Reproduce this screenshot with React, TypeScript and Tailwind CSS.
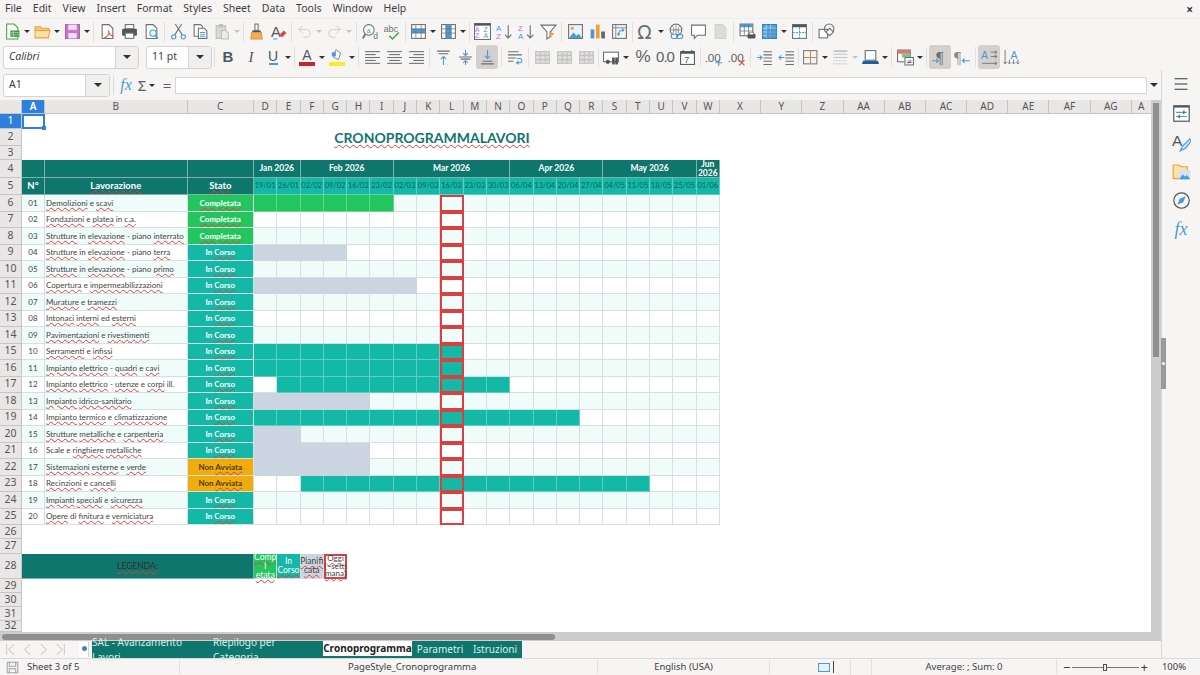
import type { ReactNode } from "react";
import { Menu as MenuIcon, Redo2, Undo2 } from "lucide-react";

const UI = "font-['Noto_Sans',sans-serif]";
const SHEET = "font-['Lato','Liberation_Sans',sans-serif]";

const menus = ["File", "Edit", "View", "Insert", "Format", "Styles", "Sheet", "Data", "Tools", "Window", "Help"];
const colLetters = ["A", "B", "C", "D", "E", "F", "G", "H", "I", "J", "K", "L", "M", "N", "O", "P", "Q", "R", "S", "T", "U", "V", "W", "X", "Y", "Z", "AA", "AB", "AC", "AD", "AE", "AF", "AG", "A"];
const dates = ["19/01", "26/01", "02/02", "09/02", "16/02", "23/02", "02/03", "09/03", "16/03", "23/03", "30/03", "06/04", "13/04", "20/04", "27/04", "04/05", "11/05", "18/05", "25/05", "01/06"];

type Bar = [string, number, number];
const rows: { name: string; state: string; bar?: Bar }[] = [
  { name: "~Demolizioni e ~scavi", state: "done", bar: ["done", 0, 5] },
  { name: "~Fondazioni e ~platea in ~c.a.", state: "done" },
  { name: "~Strutture in ~elevazione - piano ~interrato", state: "done" },
  { name: "~Strutture in ~elevazione - piano ~terra", state: "run", bar: ["plan", 0, 3] },
  { name: "~Strutture in ~elevazione - piano ~primo", state: "run" },
  { name: "~Copertura e ~impermeabilizzazioni", state: "run", bar: ["plan", 0, 6] },
  { name: "~Murature e ~tramezzi", state: "run" },
  { name: "~Intonaci ~interni ed ~esterni", state: "run" },
  { name: "~Pavimentazioni e ~rivestimenti", state: "run" },
  { name: "~Serramenti e ~infissi", state: "run", bar: ["run", 0, 8] },
  { name: "~Impianto ~elettrico - ~quadri e ~cavi", state: "run", bar: ["run", 0, 8] },
  { name: "~Impianto ~elettrico - ~utenze e ~corpi ill.", state: "run", bar: ["run", 1, 10] },
  { name: "~Impianto ~idrico-sanitario", state: "run", bar: ["plan", 0, 4] },
  { name: "~Impianto ~termico e ~climatizzazione", state: "run", bar: ["run", 0, 13] },
  { name: "~Strutture ~metalliche e ~carpenteria", state: "run", bar: ["plan", 0, 1] },
  { name: "Scale e ~ringhiere ~metalliche", state: "run", bar: ["plan", 0, 4] },
  { name: "~Sistemazioni ~esterne e ~verde", state: "wait", bar: ["plan", 0, 4] },
  { name: "~Recinzioni e ~cancelli", state: "wait", bar: ["run", 2, 16] },
  { name: "~Impianti ~speciali e ~sicurezza", state: "run" },
  { name: "~Opere di ~finitura e ~verniciatura", state: "run" },
];

const stateCell: Record<string, string> = {
  done: "bg-[#22c55e] text-white",
  run: "bg-[#14b8a6] text-white",
  wait: "bg-[#f0ac0a] text-[#4a3a10]",
};
const stateText: Record<string, string> = { done: "~Completata", run: "In ~Corso", wait: "Non ~Avviata" };
const barCell: Record<string, string> = {
  done: "bg-[#22c55e] border-[#5fd88a]",
  run: "bg-[#14b8a6] border-[#5ccfc2]",
  plan: "bg-[#cbd5e1] border-[#cbd5e1]",
};

// words with a leading ~ get the red spellcheck squiggle
function Spell({ text }: { text: string }) {
  return (
    <>
      {text.split(" ").map((w, i) => (
        <span key={i}>
          {i > 0 && " "}
          {w.startsWith("~") ? (
            <span className="underline decoration-wavy decoration-[#e23b3b] decoration-1 underline-offset-1">{w.slice(1)}</span>
          ) : (
            w
          )}
        </span>
      ))}
    </>
  );
}

function Svg({ children, className = "w-[17px] h-[17px]" }: { children: ReactNode; className?: string }) {
  return (
    <svg viewBox="0 0 16 16" fill="none" strokeWidth="1" className={className}>
      {children}
    </svg>
  );
}

function Btn({ children, active }: { children: ReactNode; active?: boolean }) {
  return (
    <div className={`w-[22px] h-[24px] shrink-0 flex items-center justify-center rounded-[3px] ${active ? "bg-[#d3d0cd]" : ""}`}>{children}</div>
  );
}
const Arr = ({ dim }: { dim?: boolean }) => (
  <div className="w-[8px] shrink-0 flex items-center justify-center">
    <div className={`w-0 h-0 border-l-[3px] border-r-[3px] border-t-[3px] border-l-transparent border-r-transparent ${dim ? "border-t-[#c4c4c4]" : "border-t-[#2e3436]"}`} />
  </div>
);
const Sep = ({ className = "w-[5px]" }: { className?: string }) => (
  <div className={`${className} shrink-0 flex justify-center`}>
    <div className="w-px h-[20px] bg-[#e2e0dd]" />
  </div>
);

const G = "#6b6f72";
const B = "#4a9ad4";

const Lines = ({ rows: r }: { rows: [number, number][] }) => (
  <>
    {r.map(([a, b], i) => (
      <path key={i} d={`M${a} ${2.5 + i * 2.75}H${b}`} stroke={G} />
    ))}
  </>
);
const Doc = ({ s = G }: { s?: string }) => <path d="M3 1.5h6.5l3.5 3.5v9.5H3z" stroke={s} fill="#fff" />;
const Grid3 = ({ s = "#c2c2c2" }: { s?: string }) => (
  <>
    <rect x="1.5" y="2.5" width="13" height="11" fill="#dedddb" stroke={s} />
    <path d="M1.5 6h13M1.5 10h13M6 2.5v11M10.5 2.5v11" stroke={s} />
  </>
);
const Txt = ({ x, y, s, c, w = 400, t, f = "Liberation Sans", i }: { x: number; y: number; s: number; c: string; w?: number; t: string; f?: string; i?: boolean }) => (
  <text x={x} y={y} fontSize={s} fill={c} fontWeight={w} fontFamily={f} fontStyle={i ? "italic" : "normal"}>
    {t}
  </text>
);

const icons = {
  newDoc: (
    <Svg>
      <path d="M2.5 1h7l3.5 3.5V15h-10.500z" stroke="#43a047" fill="#fff" />
      <rect x="6" y="7" width="8.500" height="6" fill="#3d9a45" />
      <path d="M6 9h8.500M6 11h8.500M9 7v6" stroke="#bfe5c1" strokeWidth=".6" />
    </Svg>
  ),
  open: (
    <Svg>
      <path d="M1 3.500h5l1.500 1.500H14v2H1z" fill="#f9c57c" stroke="#e8a33d" />
      <path d="M1 14V7h14l-1.500 7z" fill="#fde0ae" stroke="#e8a33d" />
    </Svg>
  ),
  save: (
    <Svg>
      <rect x="1.500" y="1.500" width="13" height="13" fill="#c678cf" stroke="#a95cb5" />
      <rect x="4" y="1.500" width="8" height="5" fill="#f3dcf5" />
      <rect x="4" y="9.500" width="8" height="5" fill="#f3dcf5" />
    </Svg>
  ),
  pdf: (
    <Svg>
      <Doc />
      <path d="M5 14c3-1 5-4 4-7 0 3 2 5 5 5.500" stroke="#e0493d" />
    </Svg>
  ),
  print: (
    <Svg>
      <rect x="4" y="1.500" width="8" height="4" stroke={G} fill="#fff" />
      <rect x="1" y="5.500" width="14" height="6.500" rx="1" fill="#50575c" />
      <rect x="4" y="9.500" width="8" height="5" fill="#fff" stroke={G} />
    </Svg>
  ),
  preview: (
    <Svg>
      <Doc />
      <circle cx="9.500" cy="9.500" r="3" stroke={B} fill="#eaf4fb" />
      <path d="M11.500 12l2.500 2.500" stroke={B} strokeWidth="1.500" />
    </Svg>
  ),
  cut: (
    <Svg>
      <circle cx="3.500" cy="13" r="2" stroke={B} />
      <circle cx="12.500" cy="13" r="2" stroke={B} />
      <path d="M4.500 11.200L11 1M11.500 11.200L5 1" stroke={G} />
    </Svg>
  ),
  copy: (
    <Svg>
      <path d="M2 1.500h6l2 2v9H2z" stroke={G} fill="#fff" />
      <path d="M6 5h5.500l2.500 2.500v7H6z" stroke={G} fill="#fff" />
      <path d="M7.500 9h5M7.500 11h5M7.500 13h5" stroke={B} />
    </Svg>
  ),
  paste: (
    <Svg>
      <rect x="2" y="2.500" width="9" height="12" fill="#d8d8d6" stroke="#bdbdbd" />
      <rect x="4.500" y="1" width="4" height="3" fill="#bdbdbd" />
      <path d="M7 7h4l2.500 2.500V15H7z" fill="#ececea" stroke="#bdbdbd" />
    </Svg>
  ),
  clone: (
    <Svg>
      <rect x="6.500" y="1" width="3" height="6" fill="#fff" stroke={G} />
      <rect x="4" y="7" width="8" height="2" fill="#50575c" />
      <path d="M3.500 9h9l.8 6H2.700z" fill="#f5ab54" stroke="#e8923a" />
    </Svg>
  ),
  clear: (
    <Svg>
      <Txt x={1} y={13} s={14} c="#50575c" t="A" />
      <path d="M7 15H3" stroke={B} />
      <path d="M9 11l4-4 2.500 2.500-4 4z" fill="#e0493d" />
    </Svg>
  ),
  undo: <Undo2 className="w-[17px] h-[17px] text-[#c9c9c9]" strokeWidth={1.2} />,
  redo: <Redo2 className="w-[17px] h-[17px] text-[#c9c9c9]" strokeWidth={1.2} />,
  find: (
    <Svg>
      <circle cx="6.500" cy="6.500" r="5" stroke={G} fill="#fff" />
      <path d="M3 10.500L.8 14.500" stroke={G} strokeWidth="1.800" />
      <Txt x={4.300} y={9} s={7} c={B} t="a" />
      <Txt x={10.500} y={15.500} s={8} c={G} t="d" />
    </Svg>
  ),
  spell: (
    <Svg>
      <Txt x={-.5} y={8} s={8.500} c={G} t="abc" />
      <path d="M5 12l3 3 6-6" stroke="#43a047" strokeWidth="1.300" />
    </Svg>
  ),
  rows: (
    <Svg>
      <rect x="1.500" y="1.500" width="13" height="13" fill="#fff" stroke={G} />
      <rect x="1.500" y="5.500" width="13" height="4" fill={B} />
      <path d="M1.500 5.500h13M1.500 9.500h13M5.500 1.500v13M10.500 1.500v13" stroke={G} strokeWidth=".7" />
    </Svg>
  ),
  cols: (
    <Svg>
      <rect x="1.500" y="1.500" width="13" height="13" fill="#fff" stroke={G} />
      <rect x="5.500" y="1.500" width="5" height="13" fill={B} />
      <path d="M1.500 5.500h13M1.500 9.500h13M5.500 1.500v13M10.500 1.500v13" stroke={G} strokeWidth=".7" />
    </Svg>
  ),
  sort: (
    <Svg>
      <rect x=".5" y=".5" width="15" height="15" fill="#fff" stroke={G} />
      <rect x=".5" y=".5" width="15" height="2" fill="#50575c" />
      <Txt x={1} y={8.500} s={6.500} c="#c86dd0" t="A" />
      <Txt x={1} y={14.500} s={6.500} c="#c86dd0" t="Z" />
      <Txt x={9} y={8.500} s={6.500} c={B} t="Z" />
      <Txt x={9} y={14.500} s={6.500} c={B} t="A" />
    </Svg>
  ),
  asc: (
    <Svg>
      <Txt x={0} y={7.500} s={7.500} c={B} t="A" />
      <Txt x={0} y={15} s={7.500} c="#c86dd0" t="Z" />
      <path d="M11.500 2v12M8.500 11l3 3 3-3" stroke={G} />
    </Svg>
  ),
  desc: (
    <Svg>
      <Txt x={0} y={7.500} s={7.500} c="#c86dd0" t="Z" />
      <Txt x={0} y={15} s={7.500} c={B} t="A" />
      <path d="M11.500 2v12M8.500 11l3 3 3-3" stroke={G} />
    </Svg>
  ),
  filter: (
    <Svg>
      <path d="M1 2h14l-5.500 6.500V13L6.500 15V8.500z" stroke={G} fill="#fff" />
      <path d="M12 6l-3.500 5h2.500l-1.500 4 4-5.500h-2.500z" fill="#f0a030" />
    </Svg>
  ),
  image: (
    <Svg>
      <rect x="1.500" y="1.500" width="13" height="13" fill="#e8f3fb" stroke={G} />
      <circle cx="5" cy="5" r="1.500" fill="#f0a030" />
      <path d="M2 14l4-5 3 3 2-2 3 4z" fill={B} />
    </Svg>
  ),
  chart: (
    <Svg>
      <rect x="1.500" y="6" width="3.500" height="8.500" fill={B} />
      <rect x="6.500" y="1.500" width="3.500" height="13" fill="#f0a030" />
      <rect x="11.500" y="8" width="3.500" height="6.500" fill="#60666a" />
    </Svg>
  ),
  pivot: (
    <Svg>
      <rect x="1.500" y="1.500" width="13" height="13" fill="#f4f4f2" stroke={G} />
      <path d="M1.500 4.500h13M4.500 1.500v13" stroke={G} strokeWidth=".7" />
      <path d="M7 11c0-3 2-4.500 5-4.500M10.500 5l1.500 1.500L10.500 8M6 10l1 1.500L8.500 10" stroke={B} />
    </Svg>
  ),
  omega: (
    <Svg className="w-[20px] h-[20px]">
      <Txt x={1} y={13.500} s={15} c={G} t="Ω" f="DejaVu Sans" />
    </Svg>
  ),
  link: (
    <Svg>
      <circle cx="7.500" cy="6.500" r="5.500" stroke={G} fill="#fff" />
      <path d="M2 6.500h11M7.500 1v11M4 2.500c2 2.500 2 5.500 0 8M11 2.500c-2 2.500-2 5.500 0 8" stroke={G} strokeWidth=".7" />
      <rect x="3" y="10.500" width="6" height="4" rx="2" stroke={B} fill="#fff" />
      <rect x="8" y="10.500" width="6" height="4" rx="2" stroke={B} fill="none" />
    </Svg>
  ),
  comment: (
    <Svg>
      <path d="M1.500 2h13v9.500H7L4 14.500v-3H1.500z" stroke={G} fill="#fff" />
    </Svg>
  ),
  header: (
    <Svg>
      <path d="M3 1.500h7l3 3v10H3z" fill="#dcdcda" stroke="#d0d0ce" />
    </Svg>
  ),
  printArea: (
    <Svg>
      <rect x="1" y="1" width="12" height="11" fill="#fff" stroke={G} />
      <rect x="1" y="1" width="12" height="3" fill={B} />
      <path d="M1 7.500h12M5 1v11M9 1v11" stroke={G} strokeWidth=".7" />
      <rect x="8" y="10" width="7.500" height="4.500" rx="1" fill="#50575c" />
      <rect x="10" y="9" width="3.500" height="2" fill="#fff" stroke={G} strokeWidth=".5" />
    </Svg>
  ),
  freeze: (
    <Svg>
      <rect x="1.500" y="1.500" width="13" height="13" fill="#5aa7dc" stroke="#2a78b8" />
      <path d="M1.500 5h13M1.500 8.500h13M1.500 12h13M5 1.500v13M9 1.500v13" stroke="#d7ebf8" strokeWidth=".6" />
      <path d="M5 5h9.500v9.500H5z" fill="#3f8fc9" opacity=".6" />
    </Svg>
  ),
  split: (
    <Svg>
      <rect x="1.500" y="1.500" width="13" height="13" fill="#fff" stroke={G} />
      <rect x="1.500" y="1.500" width="13" height="2.500" fill="#50575c" />
      <path d="M1.500 9h13M8 4v10" stroke={B} strokeDasharray="2 1" />
    </Svg>
  ),
  shapes: (
    <Svg>
      <rect x="1" y="6" width="8" height="8" fill="#fff" stroke={G} />
      <circle cx="10.500" cy="5.500" r="4.500" stroke={G} />
      <path d="M11 5l3.500 3.500L11 12 7.500 8.500z" fill="#fff" stroke={G} />
    </Svg>
  ),
  bold: <span className="text-[15px] font-bold text-[#50575c] font-['Liberation_Sans',sans-serif]">B</span>,
  italic: <span className="text-[15px] italic text-[#50575c] font-['Liberation_Serif',serif]">I</span>,
  under: (
    <span className="flex flex-col items-center leading-none">
      <span className="text-[14px] text-[#50575c] font-['Liberation_Sans',sans-serif]">U</span>
      <span className="block w-[9px] h-[1.500px] bg-[#4a9ad4]" />
    </span>
  ),
  fontColor: (
    <span className="flex flex-col items-center leading-none">
      <span className="text-[14px] text-[#50575c] font-['Liberation_Sans',sans-serif]">A</span>
      <span className="block w-[16px] h-[4px] bg-[#c0282d]" />
    </span>
  ),
  highlight: (
    <span className="flex flex-col items-center leading-none">
      <Svg className="w-[15px] h-[13px]">
        <path d="M6 1l6 4-3 8-6-3z" fill="#fff" stroke={G} />
        <rect x="1" y="4" width="5" height="5" fill={B} />
      </Svg>
      <span className="block w-[16px] h-[4px] bg-[#f5ef21]" />
    </span>
  ),
  left: <Svg><Lines rows={[[1, 15], [1, 11], [1, 15], [1, 11], [1, 15]]} /></Svg>,
  center: <Svg><Lines rows={[[1, 15], [3, 13], [1, 15], [3, 13], [1, 15]]} /></Svg>,
  right: <Svg><Lines rows={[[1, 15], [5, 15], [1, 15], [5, 15], [1, 15]]} /></Svg>,
  top: (
    <Svg>
      <path d="M2 2h12M3.500 4.500h9" stroke={G} />
      <path d="M8 15V7M5.500 9.500L8 7l2.500 2.500" stroke={B} />
    </Svg>
  ),
  middle: (
    <Svg>
      <path d="M2 7.500h12M3.500 9.500h9" stroke={G} />
      <path d="M8 1v5M5.800 3.800L8 6l2.200-2.200M8 15v-4M5.800 13L8 11l2.200 2" stroke={B} />
    </Svg>
  ),
  bottom: (
    <Svg>
      <path d="M8 1v8M5.500 6.500L8 9l2.500-2.500" stroke={B} />
      <path d="M3.500 11.500h9M2 14h12" stroke={G} />
    </Svg>
  ),
  wrap: (
    <Svg>
      <path d="M1 2.500h10M1 5.500h13M1 8.500h7M1 11.500h5" stroke={G} />
      <path d="M9 9h3.500c2 0 2 4 0 4H9M11 11.500L9 13l2 1.500" stroke={B} />
    </Svg>
  ),
  merge1: <Svg><Grid3 /></Svg>,
  currency: (
    <Svg className="w-[18px] h-[17px]">
      <rect x="1" y="3" width="14" height="9" fill="#fff" stroke={G} />
      <circle cx="5" cy="12" r="2" fill="#50575c" />
      <rect x="9" y="8" width="2.500" height="6.500" fill="#50575c" />
      <rect x="12" y="8" width="2.500" height="6.500" fill="#50575c" />
    </Svg>
  ),
  percent: <span className="text-[17px] text-[#5c6064] font-['Liberation_Sans',sans-serif]">%</span>,
  number: <span className="text-[15px] tracking-[-1px] text-[#5c6064] font-['Liberation_Sans',sans-serif]">0.0</span>,
  date: (
    <Svg>
      <rect x="1.500" y="2.500" width="13" height="12" fill="#fff" stroke="#50575c" />
      <rect x="1.500" y="2.500" width="13" height="2" fill="#50575c" />
      <path d="M4 1v2M12 1v2" stroke="#50575c" />
      <Txt x={5} y={13} s={8.500} c="#50575c" t="7" />
    </Svg>
  ),
  addDec: (
    <Svg>
      <Txt x={-.5} y={12} s={11} c="#5c6064" t=".00" />
      <path d="M13 10v6M10 13h6" stroke={B} />
    </Svg>
  ),
  delDec: (
    <Svg>
      <Txt x={-.5} y={12} s={11} c="#5c6064" t=".00" />
      <path d="M10.500 10.500l5 5M15.500 10.500l-5 5" stroke="#e0493d" />
    </Svg>
  ),
  indent: (
    <Svg>
      <path d="M7 2.500h8M7 5.500h8M7 8.500h8M7 11.500h8M7 14.500h8" stroke={G} />
      <path d="M1 8h4M3.500 6L5.500 8l-2 2" stroke={B} />
    </Svg>
  ),
  outdent: (
    <Svg>
      <path d="M7 2.500h8M7 5.500h8M7 8.500h8M7 11.500h8M7 14.500h8" stroke={G} />
      <path d="M6 8H1M3 6L1 8l2 2" stroke={B} />
    </Svg>
  ),
  border: (
    <Svg>
      <rect x="1.500" y="1.500" width="12.500" height="12.500" stroke="#7a7a7a" />
      <path d="M8 1.500v12.500M1.500 8h12.500" stroke="#c98a5a" />
    </Svg>
  ),
  borderStyle: (
    <Svg>
      <path d="M1.500 2h13" stroke="#bdbdbd" strokeWidth="1.500" />
      <path d="M1.500 5h13M1.500 8h13" stroke="#c4c4c4" />
      <path d="M1.500 11h13M1.500 14h13" stroke="#c4c4c4" strokeDasharray="1.500 1" />
    </Svg>
  ),
  borderColor: (
    <Svg>
      <rect x="3" y="1.500" width="10" height="9" fill="#fff" stroke={G} />
      <path d="M1 11h14l1 3H0z" fill="#1d5fa3" />
    </Svg>
  ),
  cond: (
    <Svg>
      <rect x=".5" y="1" width="12" height="11" fill="#fff" stroke={G} />
      <rect x=".5" y="1" width="12" height="3.500" fill="#d87b6e" />
      <rect x="4.500" y="4.500" width="8" height="3.500" fill="#7fc48a" />
      <rect x="7.500" y="8" width="8" height="7" fill="#fff" stroke={G} />
      <Txt x={8.800} y={14} s={7} c="#50575c" t="≠" f="DejaVu Sans" />
    </Svg>
  ),
  ltr: (
    <Svg>
      <Txt x={4} y={13} s={15} c={G} t="¶" f="Liberation Serif" />
      <path d="M0 11h6M4 9l2 2-2 2" stroke={B} />
    </Svg>
  ),
  rtl: (
    <Svg>
      <Txt x={0} y={13} s={15} c="#8a8d90" t="¶" f="Liberation Serif" />
      <path d="M8 11h7M10 9l-2 2 2 2" stroke={B} />
    </Svg>
  ),
  horiz: (
    <Svg>
      <Txt x={0} y={9} s={10} c={B} t="A" />
      <path d="M9 3h6M13 1.500L15 3l-2 1.500M9 7h6M13 5.500L15 7l-2 1.500M1 13.500h14M13 12l2 1.500-2 1.500" stroke={G} strokeWidth=".8" />
    </Svg>
  ),
  vert: (
    <Svg>
      <Txt x={7} y={9} s={10} c={B} t="A" />
      <path d="M2 1v13M.5 12L2 14l1.500-2M6 10v4M4.500 12.500L6 14l1.500-1.500M10 10v4M8.500 12.500L10 14l1.500-1.500M14 10v4M12.500 12.500L14 14l1.500-1.500" stroke={G} strokeWidth=".8" />
    </Svg>
  ),
};

function Combo({ value, className, arrow = "w-[23px]", italic }: { value: string; className: string; arrow?: string; italic?: boolean }) {
  return (
    <div className={`${className} shrink-0 h-[23px] flex bg-white border border-[#d5d3d0] rounded-[3px]`}>
      <div className={`flex-1 pl-[5px] flex items-center text-[10.500px] text-[#3d3d3d] ${UI} ${italic ? "italic" : ""}`}>{value}</div>
      <div className={`${arrow} bg-[#f0efed] border-l border-[#d5d3d0] flex items-center justify-center rounded-r-[3px]`}>
        <div className="w-0 h-0 border-l-[4px] border-r-[4px] border-t-[4px] border-l-transparent border-r-transparent border-t-[#2e3436]" />
      </div>
    </div>
  );
}

function Toolbar1() {
  const i = icons;
  return (
    <div className="h-[26px] flex items-center pl-px border-t border-[#eeedeb]">
      <Btn>{i.newDoc}</Btn><Arr /><Btn>{i.open}</Btn><Arr /><Btn>{i.save}</Btn><Arr />
      <Sep />
      <Btn>{i.pdf}</Btn><Btn>{i.print}</Btn><Btn>{i.preview}</Btn>
      <Sep />
      <Btn>{i.cut}</Btn><Btn>{i.copy}</Btn><Btn>{i.paste}</Btn><Arr dim />
      <Sep className="w-[4px]" />
      <Btn>{i.clone}</Btn><Btn>{i.clear}</Btn>
      <Sep className="w-[4px]" />
      <Btn>{i.undo}</Btn><Arr dim /><Btn>{i.redo}</Btn><Arr dim />
      <Sep className="w-[6px]" />
      <Btn>{i.find}</Btn><Btn>{i.spell}</Btn>
      <Sep className="w-[4px]" />
      <Btn>{i.rows}</Btn><Arr /><Btn>{i.cols}</Btn><Arr />
      <Sep className="w-[4px]" />
      <Btn>{i.sort}</Btn><Btn>{i.asc}</Btn><Btn>{i.desc}</Btn><Btn>{i.filter}</Btn>
      <Sep className="w-[5px]" />
      <Btn>{i.image}</Btn><Btn>{i.chart}</Btn><Btn>{i.pivot}</Btn>
      <Sep />
      <Btn>{i.omega}</Btn><Arr /><Btn>{i.link}</Btn><Btn>{i.comment}</Btn><Btn>{i.header}</Btn>
      <Sep />
      <Btn>{i.printArea}</Btn><Btn>{i.freeze}</Btn><Arr /><Btn>{i.split}</Btn>
      <Sep />
      <Btn>{i.shapes}</Btn>
    </div>
  );
}

function Toolbar2() {
  const i = icons;
  return (
    <div className="h-[26px] flex items-center pl-[3px]">
      <Combo value="Calibri" italic className="w-[136px] mr-[7px]" />
      <Combo value="11 pt" className="w-[66px]" />
      <Sep />
      <Btn>{i.bold}</Btn><div className="w-px" /><Btn>{i.italic}</Btn><Btn>{i.under}</Btn><Arr />
      <Sep className="w-[4px]" />
      <Btn>{i.fontColor}</Btn><Arr /><Btn>{i.highlight}</Btn><Arr />
      <Sep />
      <Btn>{i.left}</Btn><Btn>{i.center}</Btn><Btn>{i.right}</Btn>
      <Sep />
      <Btn>{i.top}</Btn><Btn>{i.middle}</Btn><Btn active>{i.bottom}</Btn>
      <Sep className="w-[6px]" />
      <Btn>{i.wrap}</Btn>
      <Sep />
      <Btn>{i.merge1}</Btn><Btn>{i.merge1}</Btn><Btn>{i.merge1}</Btn>
      <Sep className="w-[3px]" />
      <Btn>{i.currency}</Btn><Arr />
      <div className="w-[2px]" />
      <Btn>{i.percent}</Btn><Btn>{i.number}</Btn><Btn>{i.date}</Btn>
      <Sep className="w-[4px]" />
      <Btn>{i.addDec}</Btn><div className="w-px" /><Btn>{i.delDec}</Btn>
      <Sep className="w-[6px]" />
      <Btn>{i.indent}</Btn><Btn>{i.outdent}</Btn>
      <Sep className="w-[2px]" />
      <Btn>{i.border}</Btn><Arr /><Btn>{i.borderStyle}</Btn><Arr dim /><Btn>{i.borderColor}</Btn><Arr />
      <Sep />
      <Btn>{i.cond}</Btn><Arr />
      <Sep />
      <Btn active>{i.ltr}</Btn><Btn>{i.rtl}</Btn>
      <Sep />
      <Btn active>{i.horiz}</Btn><Btn>{i.vert}</Btn>
    </div>
  );
}

function RowHead({ n, active }: { n: number; active?: boolean }) {
  return (
    <div
      className={`flex items-center justify-center text-[10.500px] border-r border-b border-[#c6c5c3] ${UI} ${
        active ? "bg-[#2f7fdc] text-white" : "bg-[#e8e7e5] text-[#555]"
      }`}
    >
      {n}
    </div>
  );
}

const headCell = "bg-[#0f766e] border-r border-b border-[#7cb3ad] flex items-center justify-center text-white font-bold text-center";
const gridLine = "border-r border-b border-[#d6e0e3]";

function Sheet() {
  return (
    <div
      className={`w-[1151px] h-[532px] overflow-hidden bg-white grid grid-cols-[22px_23px_142.5px_66.5px_repeat(20,23.3px)_repeat(10,41.2px)_20px] grid-rows-[14px_15px_17px_14px_18px_17px_repeat(20,16.5px)_14px_15px_25px_14px_14px_14px_11px] ${SHEET}`}
    >
      {/* column headers */}
      <div className="bg-[#e8e7e5] border-r border-b border-[#c6c5c3]" />
      {colLetters.map((c, i) => (
        <div
          key={i}
          className={`flex items-center justify-center text-[10px] border-r border-b border-[#c6c5c3] overflow-hidden ${UI} ${
            i === 0 ? "bg-[#2f7fdc] text-white font-semibold" : "bg-[#e8e7e5] text-[#555]"
          }`}
        >
          {c}
        </div>
      ))}

      {/* 1-3 */}
      <RowHead n={1} active />
      <div className="relative border-2 border-[#2f7fdc]">
        <div className="absolute -right-[3px] -bottom-[3px] w-[4px] h-[4px] bg-[#2f7fdc]" />
      </div>
      <div className="col-span-33" />
      <RowHead n={2} />
      <div className="col-span-23 pl-[122px] flex items-center justify-center text-[14px] font-bold text-[#0f766e]">
        <Spell text="~CRONOPROGRAMMA ~LAVORI" />
      </div>
      <div className="col-span-11" />
      <RowHead n={3} />
      <div className="col-span-34" />

      {/* 4 months */}
      <RowHead n={4} />
      <div className={headCell} />
      <div className={headCell} />
      <div className={headCell} />
      <div className={`col-span-2 text-[8.500px] ${headCell}`}>Jan 2026</div>
      <div className={`col-span-4 text-[8.500px] ${headCell}`}>Feb 2026</div>
      <div className={`col-span-5 text-[8.500px] ${headCell}`}>Mar 2026</div>
      <div className={`col-span-4 text-[8.500px] ${headCell}`}>Apr 2026</div>
      <div className={`col-span-4 text-[8.500px] ${headCell}`}>May 2026</div>
      <div className={`text-[8.500px] leading-[8.500px] ${headCell}`}>Jun 2026</div>
      <div className="col-span-11" />

      {/* 5 titles */}
      <RowHead n={5} />
      <div className={`text-[9.500px] ${headCell}`}>N°</div>
      <div className={`text-[9.500px] ${headCell}`}><Spell text="~Lavorazione" /></div>
      <div className={`text-[9.500px] ${headCell}`}><Spell text="~Stato" /></div>
      {dates.map((d) => (
        <div key={d} className="bg-[#14b8a6] border-r border-b border-[#5ccfc2] flex items-center justify-center text-[7.500px] text-[#0f5f58]">
          {d}
        </div>
      ))}
      <div className="col-span-11" />

      {/* 6-25 tasks */}
      {rows.map((r, i) => {
        const tint = i % 2 === 0 ? "bg-[#effcfa]" : "bg-white";
        return (
          <div key={i} className="contents">
            <RowHead n={i + 6} />
            <div className={`${tint} ${gridLine} flex items-center justify-center text-[8px] text-[#444]`}>
              {String(i + 1).padStart(2, "0")}
            </div>
            <div className={`${tint} ${gridLine} flex items-center pl-px text-[8px] text-[#444] whitespace-nowrap overflow-hidden`}>
              <span><Spell text={r.name} /></span>
            </div>
            <div className={`${stateCell[r.state]} border-r border-b border-[#d6e0e3] flex items-center justify-center text-[8px] font-bold`}>
              <span><Spell text={stateText[r.state]} /></span>
            </div>
            {dates.map((d, c) => {
              const on = r.bar && c >= r.bar[1] && c <= r.bar[2];
              const fill = on ? `${barCell[r.bar![0]]} border-r border-b` : `${tint} ${gridLine}`;
              return <div key={d} className={c === 8 ? `${on ? barCell[r.bar![0]].split(" ")[0] : tint} border-2 border-[#d8413f]` : fill} />;
            })}
            <div className="col-span-11" />
          </div>
        );
      })}

      <RowHead n={26} />
      <div className="col-span-34" />
      <RowHead n={27} />
      <div className="col-span-34" />

      {/* 28 legend */}
      <RowHead n={28} />
      <div className="col-span-3 bg-[#0f766e] border-r border-b border-[#7cb3ad] flex items-center justify-center text-[8.500px] text-[#3a2a2a]">
        <Spell text="~LEGENDA:" />
      </div>
      <div className="bg-[#22c55e] border-r border-b border-[#d6e0e3] flex items-center justify-center text-center text-[8.500px] leading-[9px] text-white break-all">
        <span><Spell text="~Compl" /><br /><Spell text="~etata" /></span>
      </div>
      <div className="bg-[#14b8a6] border-r border-b border-[#d6e0e3] flex items-center justify-center text-center text-[8.500px] leading-[9px] text-white">
        <span>In<br /><Spell text="~Corso" /></span>
      </div>
      <div className="bg-[#cbd5e1] border-r border-b border-[#d6e0e3] flex items-center justify-center text-center text-[8.500px] leading-[9px] text-[#444]">
        <span><Spell text="~Pianifi" /><br /><Spell text="~cata" /></span>
      </div>
      <div className="bg-white border-2 border-[#d8413f] flex items-center justify-center text-center text-[8px] leading-[7.500px] text-[#444]">
        <span><Spell text="~Oggi" /><br /><Spell text="(~setti" /><br /><Spell text="~mana)" /></span>
      </div>
      <div className="col-span-16" />
      <div className="col-span-11" />

      <RowHead n={29} />
      <div className="col-span-34" />
      <RowHead n={30} />
      <div className="col-span-34" />
      <RowHead n={31} />
      <div className="col-span-34" />
      <RowHead n={32} />
      <div className="col-span-34" />
    </div>
  );
}

const tabNav = ["M1 1v10M8 1L3 6l5 5", "M8 1L3 6l5 5", "M3 1l5 5-5 5", "M3 1l5 5-5 5M10 1v10"];

function Tabs() {
  return (
    <div className={`h-[17px] flex items-stretch text-[10px] ${UI}`}>
      <div className="w-[75px] flex items-center pl-[5px] gap-[3px] shrink-0">
        {tabNav.map((d, i) => (
          <svg key={i} viewBox="0 0 11 12" className="w-[13px] h-[13px]" fill="none" stroke="#cfcfcd">
            <path d={d} />
          </svg>
        ))}
      </div>
      <div className="w-[17px] flex items-center justify-center shrink-0">
        <div className="relative w-[10px] h-[15px] bg-white border-r border-[#d5d3d0]">
          <div className="absolute right-[1px] top-[4px] w-[5px] h-[5px] rounded-full bg-[#4a80b8]" />
        </div>
      </div>
      <div className="w-[121px] bg-[#0f766e] text-[#d8eeea] flex items-center justify-center">SAL - Avanzamento Lavori</div>
      <div className="w-[110px] bg-[#0f766e] text-[#d8eeea] flex items-center justify-center">Riepilogo per Categoria</div>
      <div className="w-[89px] bg-white text-[#222] font-bold flex items-center justify-center border-b-2 border-[#0f766e]">Cronoprogramma</div>
      <div className="w-[56px] bg-[#0f766e] text-[#d8eeea] flex items-center justify-center">Parametri</div>
      <div className="w-[54px] bg-[#0f766e] text-[#d8eeea] flex items-center justify-center">Istruzioni</div>
    </div>
  );
}

function Sidebar() {
  return (
    <div className="w-[39px] shrink-0 border-l border-[#d8d6d3] flex flex-col items-center pt-[5px] gap-[10px] relative">
      <MenuIcon className="w-[18px] h-[18px] text-[#2e3436] mb-[1px]" strokeWidth={1.500} />
      <Svg className="w-[19px] h-[19px]">
        <rect x="1.500" y="1.500" width="13" height="13" fill="#fff" stroke="#50575c" />
        <rect x="1.500" y="1.500" width="13" height="1.500" fill="#50575c" />
        <path d="M3.500 7h9M3.500 10.500h9" stroke={B} />
        <path d="M10 5.500v3M6 9v3" stroke="#50575c" />
      </Svg>
      <Svg className="w-[19px] h-[19px]">
        <Txt x={0} y={11} s={13} c="#50575c" t="A" />
        <path d="M15 5l-6 6-2 4 4-2 5-6z" stroke={B} fill="#d8eaf7" />
      </Svg>
      <Svg className="w-[19px] h-[19px]">
        <path d="M1 2.500h5l1.500 1.500H13v10H1z" fill="#fde0ae" stroke="#e8a33d" />
        <rect x="6" y="7" width="9.500" height="7.500" fill="#cfe4f5" />
        <path d="M6 14.500l3-4 2 2 1.500-1.500 3 3.500z" fill={B} />
      </Svg>
      <Svg className="w-[19px] h-[19px]">
        <circle cx="8" cy="8" r="6.500" stroke="#50575c" />
        <path d="M11.500 4.500L9.500 9.500 4.500 11.500 6.500 6.500z" fill={B} />
      </Svg>
      <span className="text-[18px] leading-[18px] italic text-[#4a9ad4] font-['Liberation_Serif',serif]">fx</span>
      {/* deck handle */}
      <div className="absolute -left-px top-[268px] w-[5px] h-[51px] bg-[#9a9a9a] flex items-center justify-center">
        <div className="w-[3px] h-[3px] rounded-full bg-white" />
      </div>
    </div>
  );
}

function StatusBar() {
  return (
    <div className={`h-[17px] flex items-center border-t border-[#dcdad7] text-[9.500px] text-[#3d3d3d] ${UI}`}>
      <div className="w-[24px] flex justify-center">
        <Svg className="w-[13px] h-[13px]">
          <path d="M1.500 1.500h13v13h-13z" stroke="#8a8d90" />
          <path d="M4 1.500v5h8v-5M4 14.500v-5h8v5" stroke="#8a8d90" />
        </Svg>
      </div>
      <div className="w-[156px] pl-[3px] border-r border-[#e2e0dd]">Sheet 3 of 5</div>
      <div className="w-[161px] border-r border-[#e2e0dd]" />
      <div className="w-[257px] pl-[7px] border-r border-[#e2e0dd]">PageStyle_Cronoprogramma</div>
      <div className="w-[172px] text-center border-r border-[#e2e0dd]">English (USA)</div>
      <div className="w-[81px] flex items-center justify-end pr-[16px] border-r border-[#e2e0dd] h-full">
        <div className="w-[12px] h-[9px] bg-[#e3f0fa] border border-[#4a9ad4]" />
        <div className="w-px h-[12px] bg-[#444] ml-[3px]" />
      </div>
      <div className="w-[21px] border-r border-[#e2e0dd] h-full" />
      <div className="w-[185px] text-center border-r border-[#e2e0dd]">Average: ; Sum: 0</div>
      <div className="w-[91px] flex items-center pl-[6px]">
        <span className="text-[13px] leading-none mr-[2px]">−</span>
        <div className="relative flex-1 h-px bg-[#777]">
          <div className="absolute left-[31px] -top-[3px] w-[4px] h-[7px] bg-[#f6f5f4] border border-[#555]" />
        </div>
        <span className="text-[13px] leading-none ml-[2px]">+</span>
      </div>
      <div className="flex-1 text-center">100%</div>
    </div>
  );
}

export default function App() {
  return (
    <div className={`w-[1200px] h-[675px] overflow-hidden flex flex-col bg-[#f6f5f4] ${UI}`}>
      <div className="h-[18px] flex items-center pl-[5px] gap-[11px] text-[10.500px] text-[#3d3d3d] relative">
        {menus.map((m) => (
          <span key={m}>{m}</span>
        ))}
        <span className="absolute right-[7px] top-[1px] text-[12px] font-bold text-[#2e3436]">×</span>
      </div>
      <Toolbar1 />
      <Toolbar2 />
      <div className="flex flex-1 min-h-0">
        <div className="flex-1 min-w-0 flex flex-col">
          <div className="h-[30px] flex items-center pl-[3px]">
            <Combo value="A1" className="w-[107px]" arrow="w-[24px]" />
            <div className="w-px h-[20px] bg-[#dcdad7] ml-[3px]" />
            <span className="w-[20px] ml-[2px] text-center text-[16px] italic text-[#4a9ad4] font-['Liberation_Serif',serif]">fx</span>
            <span className="w-[12px] text-center text-[15px] text-[#5c6064]">Σ</span>
            <Arr />
            <span className="w-[18px] ml-[2px] text-center text-[15px] text-[#5c6064]">=</span>
            <div className="w-[972px] h-[17px] bg-white border border-[#d8d6d3] ml-[-1px]" />
            <div className="flex-1 flex justify-center">
              <div className="w-0 h-0 border-l-[4px] border-r-[4px] border-t-[4px] border-l-transparent border-r-transparent border-t-[#2e3436]" />
            </div>
          </div>
          <div className="flex flex-1 min-h-0">
            <Sheet />
            <div className="flex-1 bg-[#cdcdcd] pt-[3px] flex justify-center">
              <div className="w-[6px] h-[254px] bg-[#8f8f8f]" />
            </div>
          </div>
          <div className="h-[9px] bg-[#cdcdcd] flex items-center pl-[2px] shrink-0">
            <div className="w-[553px] h-[6px] bg-[#8f8f8f] rounded-[3px]" />
          </div>
          <Tabs />
        </div>
        <Sidebar />
      </div>
      <StatusBar />
    </div>
  );
}
